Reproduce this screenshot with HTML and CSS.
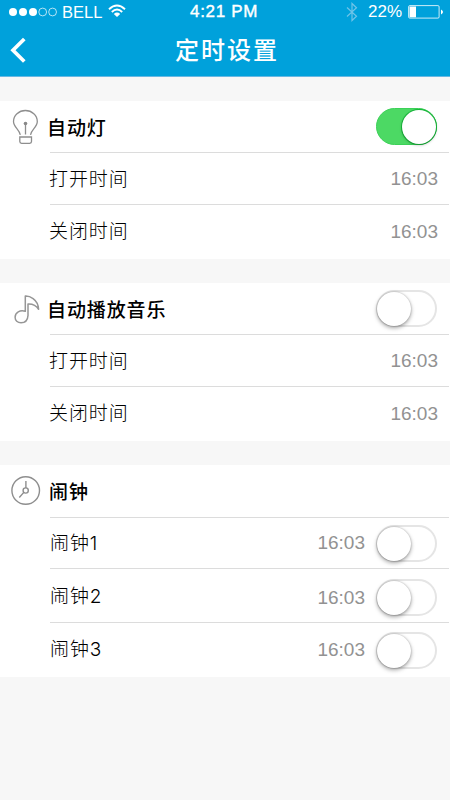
FILE: index.html
```html
<!DOCTYPE html>
<html lang="zh-CN">
<head>
<meta charset="utf-8">
<title>定时设置</title>
<link rel="stylesheet" href="styles.css">
</head>
<body>
<header class="header">
  <div class="status">
    <svg class="signal" width="48" height="10" viewBox="0 0 48 10"><g fill="#fff"><circle cx="4" cy="5" r="4"/><circle cx="14" cy="5" r="4"/><circle cx="24" cy="5" r="4"/></g><g fill="none" stroke="#fff" stroke-width=".7"><circle cx="33.700" cy="5" r="3.900"/><circle cx="43.600" cy="5" r="3.900"/></g></svg>
    <span class="carrier">BELL</span>
    <svg class="wifi" width="18" height="14" viewBox="0 0 18 14"><g fill="none" stroke="#fff" stroke-width="1.900"><path d="M1 5.200Q9-2.200 17 5.200"/><path d="M3.800 8Q9 3 14.200 8"/></g><path d="M5.800 10Q9 7.200 12.200 10L9 13z" fill="#fff"/></svg>
    <span class="clock">4:21 PM</span>
    <svg class="bluetooth" width="12" height="20" viewBox="0 0 12 20"><path d="M1 5.500L10.500 14.300 6 18.500V1.500L10.500 5.700 1 14.500" fill="none" stroke="#6fc4e8" stroke-width="1.200"/></svg>
    <span class="percent">22%</span>
    <svg class="battery" width="36" height="14" viewBox="0 0 36 14"><rect x=".6" y=".6" width="30.500" height="12.500" rx="1.200" fill="none" stroke="#fff" stroke-opacity=".8"/><path d="M1.500 1.500H8V12.300H1.500z" fill="#fff"/><path d="M33 4.500Q37 7 33 9.500z" fill="#fff"/></svg>
  </div>
  <div class="nav">
    <svg class="back" width="16" height="26" viewBox="0 0 16 26"><path d="M14.300 2L3 13.300 14.300 24.500" fill="none" stroke="#fff" stroke-width="3.700"/></svg>
    <h1 class="title">定时设置</h1>
  </div>
</header>
<main>
  <section class="group">
    <div class="row head">
      <svg class="icon" width="30" height="36" viewBox="0 0 30 36"><g fill="none" stroke="#8e8e8e" stroke-width="1.300"><path d="M9.300 25.800C8.500 20.500 2.500 18 2.500 12.500A11.900 11 0 0 1 26.300 12.500C26.300 18 20.300 20.500 19.500 25.800"/><path d="M14.500 14.500V25.500"/><path d="M8.800 28H20.500V32.500Q20.500 34.300 18.700 34.300H10.600Q8.800 34.300 8.800 32.500z"/></g><circle cx="14.500" cy="14.500" r="1.800" fill="#888"/></svg>
      <h2 class="name">自动灯</h2><span class="toggle on"></span>
    </div>
    <div class="row line"><span class="label">打开时间</span><span class="time">16:03</span></div>
    <div class="row line last"><span class="label">关闭时间</span><span class="time">16:03</span></div>
  </section>
  <section class="group">
    <div class="row head">
      <svg class="icon" width="30" height="36" viewBox="0 0 30 36"><path d="M14.300 20.300V5C18 4.800 27 7.500 27.600 18.300C25 14 21.500 12.800 17 13V24.500C16.700 29.500 13.500 31.800 10 31.800C6.500 31.800 4.100 29.500 4.100 26.300C4.100 21.500 9 18.700 14.300 20.300z" fill="none" stroke="#969696" stroke-width="1.500" stroke-linejoin="round"/></svg>
      <h2 class="name">自动播放音乐</h2><span class="toggle"></span>
    </div>
    <div class="row line"><span class="label">打开时间</span><span class="time">16:03</span></div>
    <div class="row line last"><span class="label">关闭时间</span><span class="time">16:03</span></div>
  </section>
  <section class="group alarms">
    <div class="row head">
      <svg class="icon" width="30" height="36" viewBox="0 0 30 36"><g fill="none" stroke="#8e8e8e" stroke-width="1.400"><circle cx="14.700" cy="17.500" r="13.800"/><circle cx="14.700" cy="17.500" r="2.600"/><path d="M14.900 8V15M12.800 19.400L8.300 24.500"/></g></svg>
      <h2 class="name">闹钟</h2>
    </div>
    <div class="row line first"><span class="label">闹钟1</span><span class="time">16:03</span><span class="toggle"></span></div>
    <div class="row line second"><span class="label">闹钟2</span><span class="time">16:03</span><span class="toggle"></span></div>
    <div class="row line last"><span class="label">闹钟3</span><span class="time">16:03</span><span class="toggle"></span></div>
  </section>
</main>
</body>
</html>
```

FILE: styles.css
```css
* { box-sizing: border-box; }
body {
  margin: 0;
  height: 800px;
  background: #f7f7f7;
  font-family: "Liberation Sans", "Noto Sans CJK SC", sans-serif;
  color: #000;
}
.header {
  height: 77px;
  background: #00a1db;
  border-bottom: 1px solid #67b8e3;
  color: #fff;
}
.status {
  height: 24px;
  display: flex;
  align-items: center;
  font-size: 17px;
  line-height: 24px;
  white-space: nowrap;
}
.signal { margin-left: 9px; }
.carrier { width: 41px; margin-left: 5px; font-size: 16.5px; }
.wifi { margin-left: 5px; margin-top: -2px; }
.clock {
  width: 70px;
  margin-left: 64px;
  letter-spacing: .7px;
  -webkit-text-stroke: .4px #fff;
}
.bluetooth { margin-left: 86px; }
.percent { width: 36px; margin-left: 10px; }
.battery { margin-left: 4px; }
.nav {
  height: 52px;
  display: grid;
  grid-template-columns: 48px 1fr 46px;
  align-items: center;
}
.back { margin-left: 10px; }
.title {
  margin: 0;
  padding: 0 0 2px 2px;
  text-align: center;
  font: 500 24px/50px "Noto Sans CJK SC", sans-serif;
  letter-spacing: 2px;
}
.group {
  height: 158px;
  margin-top: 24px;
  background: #fff;
}
.row {
  height: 52px;
  display: flex;
  align-items: center;
  padding-right: 13px;
}
.head { height: 51px; }
.line {
  margin-left: 50px;
  margin-right: 1px;
  padding-right: 11px;
  border-top: 1px solid #dcdcdc;
}
.last { height: 55px; }
.alarms { height: 212px; }
.alarms .head { height: 52px; }
.alarms .line { padding-right: 12px; }
.alarms .first { height: 51px; }
.alarms .second { height: 54px; }
.alarms .second .time { margin-top: 4px; }
.alarms .second .toggle { margin-top: 3px; }
.alarms .last { height: 55px; }
.icon { margin-left: 11px; flex: none; }
.name {
  margin: 0 auto 0 6px;
  font: 500 19px/50px "Noto Sans CJK SC", sans-serif;
  letter-spacing: .9px;
}
.alarms .name { margin-left: 8px; }
.label {
  margin-left: -1px;
  margin-right: auto;
  padding-top: 2px;
  font: 300 19px/48px Inter, "Noto Sans CJK SC", sans-serif;
  letter-spacing: .9px;
}
.last .label { padding-top: 0; }
.alarms .label { margin-left: 0; }
.time {
  font-size: 19px;
  color: #929292;
}
.toggle {
  width: 61px;
  height: 37px;
  margin-left: 11px;
  border: 2px solid #e5e5e5;
  border-radius: 19px;
  background: #fff;
}
.toggle::before {
  content: "";
  display: block;
  width: 34px;
  height: 34px;
  margin-left: -1px;
  border-radius: 50%;
  background: #fff;
  box-shadow: 0 2px 4px rgba(0, 0, 0, .35), 0 0 2px rgba(0, 0, 0, .25);
}
.toggle.on {
  border: 1px solid #3cd158;
  background: #4cd964;
}
.toggle.on::before {
  margin: 1px 0 0 25px;
  box-shadow: 0 1px 3px rgba(0, 0, 0, .3), 0 0 0 1px #18bd3c;
}
```
